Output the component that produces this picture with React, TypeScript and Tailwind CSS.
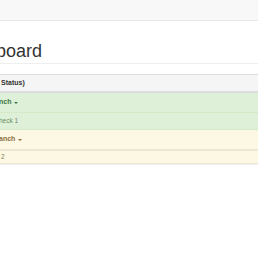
import React from "react";

function Caret() {
  return (
    <span className="ml-[3px] inline-block h-0 w-0 border-x-[2px] border-t-[2px] border-x-transparent border-t-current align-middle" />
  );
}

export default function App() {
  return (
    <div
      className="h-[258px] w-[258px] overflow-hidden bg-white text-[#333]"
      style={{ fontFamily: '"Liberation Sans", Arial, sans-serif' }}
    >
      <div className="h-[21px] border-b border-[#e7e7e7] bg-[#f8f8f8]" />
      <div className="h-[43px] border-b border-[#eeeeee] pt-[21px]">
        <h1 className="-ml-[4px] text-[18px] leading-[18px] text-[#333]">board</h1>
      </div>
      <div className="mt-[10px] border-t border-[#dddddd]">
        <div className="flex h-[18px] items-center border-b-2 border-[#dddddd] bg-[#f5f5f5] pl-[1px] text-[7px] font-bold">
          Status)
        </div>
        <div className="flex h-[20px] items-center border-b border-[#d6e9c6] bg-[#dff0d8] text-[7px] font-bold text-[#3c763d]">
          <span className="-ml-[1px]">nch</span>
          <Caret />
        </div>
        <div className="flex h-[17px] items-center border-b border-[#d6e9c6] bg-[#dff0d8] text-[6.5px] text-[#6a8a65]">
          <span className="-ml-[1px]">heck 1</span>
        </div>
        <div className="flex h-[19px] items-center bg-[#fcf8e3] text-[7px] font-bold text-[#8a6d3b]">
          <span className="-ml-[1px]">anch</span>
          <Caret />
        </div>
        <div className="h-[2px] bg-[#ede6d6]" />
        <div className="flex h-[13px] items-center border-b border-[#ede6d6] bg-[#fcf8e3] pl-[1px] text-[6.5px] text-[#8a7a5b]">
          2
        </div>
        <div className="h-[1px] bg-[#f2f2f2]" />
      </div>
    </div>
  );
}
